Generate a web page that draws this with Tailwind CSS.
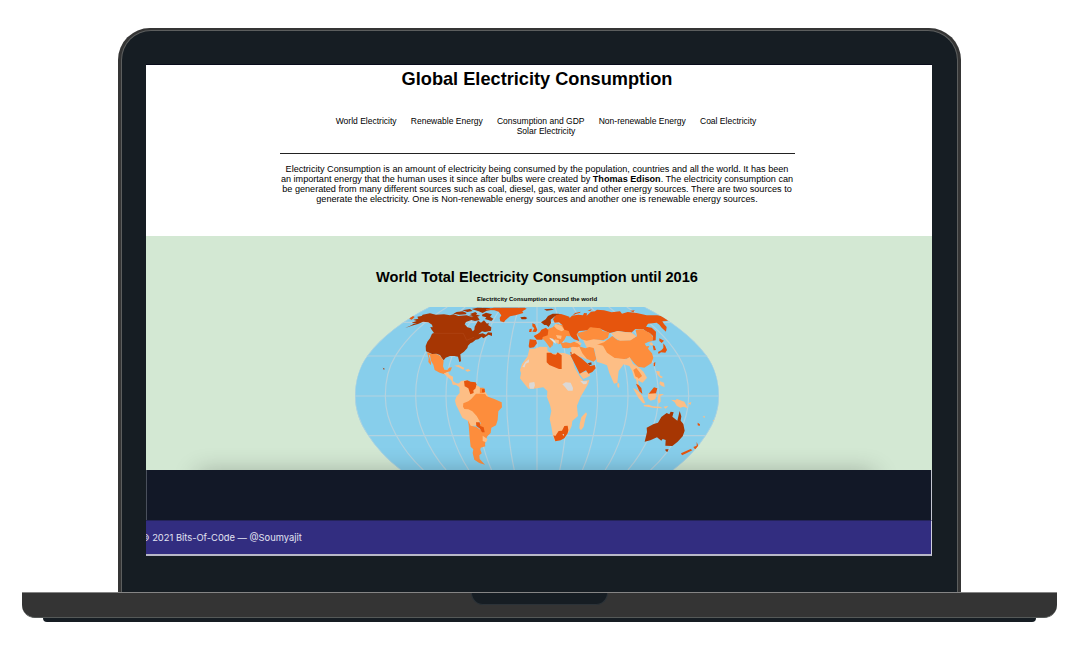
<!DOCTYPE html>
<html lang="en">
<head>
<meta charset="utf-8">
<title>Global Electricity Consumption</title>
<script src="https://cdn.jsdelivr.net/npm/@tailwindcss/browser@4"></script>
</head>
<body class="bg-white w-[1080px] h-[663px] overflow-hidden font-['Liberation_Sans',Arial,sans-serif] text-black">
<div class="flex flex-col items-center pt-[28px] pr-[1px]">
  <!-- laptop lid -->
  <div class="w-[843px] h-[564px] rounded-t-[32px] bg-[#353535] px-[3px] pt-[2px]">
    <div class="h-full rounded-t-[30px] border border-b-0 border-[#5c5e5e] bg-[#161d23] pl-[24px] pt-[33px]">
      <div class="w-[786px] h-[492px] border-t border-[#080b1a] flex flex-col overflow-hidden">
        <header class="h-[171px] shrink-0 bg-white flex flex-col items-center pr-[4px] text-[8.53px] leading-[10.25px]">
          <h1 class="mt-[3px] text-[18.2px] leading-[22px] font-bold whitespace-nowrap">Global Electricity Consumption</h1>
          <nav class="mt-[26px] ml-[18px] flex flex-col items-center whitespace-nowrap">
            <div class="flex gap-[14.2px]"><span>World Electricity</span><span>Renewable Energy</span><span>Consumption and GDP</span><span>Non-renewable Energy</span><span>Coal Electricity</span></div>
            <span>Solar Electricity</span>
          </nav>
          <div class="mt-[16px] w-[515px] h-px bg-[#222] shrink-0"></div>
          <p class="mt-[10px] text-center whitespace-nowrap text-[9.12px]">Electricity Consumption is an amount of electricity being consumed by the population, countries and all the world. It has been<br>an important energy that the human uses it since after bulbs were created by <b>Thomas Edison</b>. The electricity consumption can<br>be generated from many different sources such as coal, diesel, gas, water and other energy sources. There are two sources to<br>generate the electricity. One is Non-renewable energy sources and another one is renewable energy sources.</p>
        </header>
        <main class="relative h-[234px] shrink-0 bg-[#d3e8d3] flex flex-col items-center pr-[4px]">
          <h2 class="mt-[32px] text-[14.58px] leading-[18px] font-bold whitespace-nowrap">World Total Electricity Consumption until 2016</h2>
          <h3 class="mt-[10px] h-[7px] text-[5.94px] leading-[7px] font-bold whitespace-nowrap">Electritcity Consumption around the world</h3>
          <svg class="mt-[4px] ml-[6px] w-[380px] h-[163px] shrink-0" viewBox="0 51 1140 489" fill="none">
            <defs>
              <clipPath id="globe"><path d="M238 51C165 88 97 137 52 197C28 229 15 275 15 318C15 361 30 400 52 433C77 472 112 510 152 540H970C1010 510 1045 472 1070 433C1092 400 1107 361 1107 318C1107 275 1094 229 1070 197C1025 137 957 88 884 51Z"/></clipPath>
              <path id="m" vector-effect="non-scaling-stroke" d="M238 51C165 88 97 137 52 197C28 229 15 275 15 318C15 361 30 400 52 433C77 472 112 510 152 540M970 540C1010 510 1045 472 1070 433C1092 400 1107 361 1107 318C1107 275 1094 229 1070 197C1025 137 957 88 884 51"/>
            </defs>
            <g clip-path="url(#globe)">
              <path fill="#87ceeb" d="M0 51H1140V540H0Z"/>
              <g stroke="#b3d2df" stroke-width="1.2">
                <path stroke-width="3.6" d="M0 97H1140M0 198H1140M0 318H1140M0 437H1140M561 51V540"/>
                <use href="#m"/>
                <use href="#m" transform="translate(93.5) scale(.8333 1)"/>
                <use href="#m" transform="translate(187) scale(.6667 1)"/>
                <use href="#m" transform="translate(280.5) scale(.5 1)"/>
                <use href="#m" transform="translate(374) scale(.3333 1)"/>
                <use href="#m" transform="translate(467.5) scale(.1667 1)"/>
              </g>
              <!-- North America -->
              <path fill="#a63603" d="M165 114L184 106L190 102L200 101L185 98L200 93L190 89L205 86L202 80L215 78L218 74L240 70L258 74L282 73L300 76L311 73L325 78L350 76L366 82L372 78L384 82L389 90L375 93L364 90L348 96L344 103L352 112L363 115L368 124L373 120L374 110L384 92L393 98L402 91L411 101L416 98L415 106L424 112L423 122L405 126L396 124L385 133L398 130L408 134L414 127L426 128L426 138L416 134L400 145L395 140L385 148L377 149L368 157L361 160L354 167L352 174L342 185L331 193L333 214L328 216L324 200L313 198L300 198L287 203L281 211L275 203L270 195L259 191L246 192L228 184L227 168L232 155L240 145L246 131L252 129L244 118L241 111L248 112L246 104L235 97L219 95L204 102L190 106Z"/>
              <path fill="#a63603" d="M310 71L320 66L338 64L350 69L347 73L328 74ZM337 61L360 57L368 63L352 66ZM360 72L376 66L382 71L370 77ZM365 57L382 53L418 54L426 59L410 62L398 69L386 64ZM396 74L408 68L426 73L420 80L430 86L424 93L405 87L409 82L397 79ZM356 78L376 73L390 77L378 82ZM511 82L525 80L532 84L527 88L515 88ZM98 233L104 236L102 240Z"/>
              <path stroke="#b44d1f" stroke-width="1.5" d="M250 130H340L350 151L372 142"/>
              <path fill="#e6550d" d="M176 82L184 75L194 81L185 89L180 87ZM408 57L432 53H524L530 56L517 64L520 69L496 76L480 79L466 91L462 97L451 94L449 84L454 76L446 65L433 61L408 60Z"/>
              <path fill="#fd8d3c" d="M231 187L245 192L259 192L270 197L276 206L281 212L279 229L283 239L292 240L297 233L306 232L301 244L289 247L284 253L269 248L254 240L250 224L243 212L240 196L236 195L243 217L243 226L235 216L236 205Z"/>
              <path fill="#fdbe85" d="M281 250L294 247L298 254L309 260L309 273L319 280L328 284L325 288L315 283L302 269L289 258ZM313 227L326 225L343 234L340 239L326 232ZM345 240L355 237L362 242L352 245Z"/>
              <!-- South America -->
              <path fill="#fdbe85" d="M304 270L315 281L327 280L333 273L348 271L377 285L402 300L415 319L390 365L388 405L359 409L353 392L337 383L318 344L315 332L319 320L329 309L328 292L319 285L308 284Z"/>
              <path fill="#fd8d3c" d="M378 311L405 311L410 319L433 327L455 337L456 352L445 364L443 390L438 406L424 413L422 429L412 439L408 448L405 463L406 469L392 473L391 479L395 490L388 496L389 507L405 524L388 519L373 509L368 489L370 478L362 470L359 443L356 405L354 391L362 407L378 410L402 427L398 423L388 409L392 399L380 378L367 364L355 358L343 357L339 350L340 340L355 334L363 328Z"/>
              <path fill="#e6550d" d="M342 274L352 271L362 275L377 277L380 284L376 296L370 301L371 309L361 313L355 295L344 289ZM378 397L389 397L391 408L401 412L404 427L396 427L390 416L379 408ZM394 296L404 296L405 307L397 309Z"/>
              <path fill="#fd8d3c" d="M389 293L400 293L404 297L395 298L397 310L389 310Z"/>
              <path fill="#fdbe85" d="M379 285L389 291V309L380 308ZM398 437L413 448L408 457L398 453Z"/>
              <!-- Africa -->
              <path fill="#fdbe85" d="M538 176L554 176L570 170L592 171L593 183L610 192L625 188L642 189L660 195L668 210L675 235L691 262L700 273L718 270L714 283L692 320L681 347L682 360L684 378L667 393L665 408L658 423L648 438L632 450L615 454L608 435L604 409L599 387L604 363L600 345L591 322L592 303L580 292L550 296L535 296L524 283L510 265L513 250L510 240L516 222L533 199ZM708 367L711 372L706 386L701 410L693 421L688 415L689 402L694 382Z"/>
              <path fill="#e6550d" d="M590 188L603 188L609 193L618 194L623 187L635 196V237L627 237L598 225L590 217ZM610 436L616 438L626 423L636 422L643 408L653 407L655 420L653 430L643 445L632 451L616 454Z"/>
              <path fill="#dcd8d5" d="M526 216L537 208V217L527 221L524 232L517 231ZM538 278L553 276L555 286L551 296H540L537 288ZM637 283L647 277L662 278L669 294L668 302L654 302L645 291ZM690 272L703 274L712 274L709 282L700 283ZM637 433L642 432L641 438Z"/>
              <!-- Europe and Asia -->
              <g transform="translate(540)">
                <path fill="#fd8d3c" d="M48 119L68 112L78 102L98 106L130 125L120 139L109 138L103 150L94 160L85 163L77 153L65 144L70 158L67 169L53 155L42 150L35 145L20 147L18 139L30 125Z"/>
                <path fill="#e6550d" d="M-1 148L18 150L21 160L12 172L-1 174L-4 169ZM7 100L15 103L22 120L18 126L7 125L13 115L7 109ZM-1 117L6 116L4 126L-3 126ZM11 138L29 128L34 119L48 113L55 121L53 136L38 141L37 149L20 149Z"/>
                <path fill="#a63603" d="M33 97L47 88L54 78L68 71L85 71L94 74L75 79L62 89L63 99L56 111L49 105L43 105ZM42 58L65 56L72 59L50 62Z"/>
                <path fill="#fdbe85" d="M76 101L94 107L103 119L95 124L81 118L72 109ZM78 135L95 137L93 147L82 145ZM74 148L87 151L86 162L75 157ZM123 171L149 168L160 190L173 210L156 202L124 191ZM132 157L142 152L155 160L150 168ZM159 149L180 144L205 149L220 153L235 151L235 159L210 166L221 181L230 200L200 206L193 176L171 174Z"/>
                <path fill="#e1e3df" d="M58 143L67 146L76 154L77 162L70 156L60 147Z"/>
                <path fill="#fd8d3c" d="M42 149L51 151L66 168L60 174L50 160ZM92 160L108 157L121 160L132 155L143 160L152 167L143 172L128 170L114 175L98 174ZM147 169L166 175L178 171L191 174L199 207L191 215L171 207L157 190Z"/>
                <path fill="#e6550d" d="M69 88L78 75L93 72L105 76L118 80L119 84L126 77L144 74L159 76L162 69L171 70L170 77L183 65L195 64L201 59L222 61L245 67L270 64L276 71L293 66L320 69L350 76H382L406 81L419 90L409 93L397 94L402 102L410 111L408 125L395 113L388 104L380 98L354 101L348 110L365 113L378 125L377 151L367 152L369 138L359 129L350 125L339 117L316 117L304 128L264 123L239 129L212 117L183 113L175 121L147 123L140 133L148 153L132 148L122 139L116 123L103 119L97 105L87 97L74 98Z"/>
                <path fill="#e6550d" d="M127 77L135 69L152 65L150 68L137 72ZM172 62L185 58L181 63ZM300 62L314 61L310 67Z"/>
                <path fill="#fd8d3c" d="M140 130L170 122L180 112L211 115L218 123L238 127L234 143L220 151L191 148L170 152L154 148L145 138Z"/>
                <path fill="#fd8d3c" d="M200 164L222 157L247 138L263 151L300 151L321 139L317 119L337 117L360 130L370 143L366 153L354 156L344 161L349 169L358 168L354 176L366 190L370 203L364 220L343 233L324 230L313 220L301 205L277 208L246 204L226 186L218 169Z"/>
                <path fill="#fdbe85" d="M244 130L263 123L286 127L303 127L319 139L302 151L270 152L255 144ZM201 163L219 167L231 188L254 204L289 208L299 201L309 222L326 232L341 246L351 263L338 278L331 275L313 265L306 242L298 228L290 226L281 223L266 243L262 278L252 281L238 249L231 226L215 220L201 216L196 188ZM147 250L174 244L181 257L160 267ZM262 281L269 289L264 294Z"/>
                <path fill="#fd8d3c" d="M310 240L319 234L329 247L336 258L326 266L316 259Z"/>
                <path stroke="#fdbe85" stroke-width="5" d="M320 262L324 286"/>
                <path fill="#e6550d" d="M121 195L133 190L154 205L173 221L181 228L194 225L197 235L187 246L175 251L168 241L149 251L139 231ZM120 185L126 188L123 195ZM388 145L402 152L395 159L388 153ZM400 160L406 168L411 180L406 188L393 187L386 192L384 186L394 181L400 174ZM368 166L374 168L378 180L371 181ZM371 219L376 216L375 228L371 229Z"/>
                <path fill="#a63603" d="M173 220L184 217L185 224L178 225Z"/>
                <path fill="#fdbe85" d="M378 243L389 244L389 256L399 261L393 265L383 255ZM390 274L402 278L404 291L395 288L388 282ZM357 161L364 156L370 164L364 167Z"/>
                <!-- Oceania -->
                <g transform="translate(0 270)">
                  <path fill="#fdbe85" d="M309 24L322 31L337 48L346 70L339 70L325 53ZM341 75L356 74L368 79L390 80L398 85L374 84L342 79ZM354 40L373 38L381 43L376 58L362 62L354 55ZM386 43L402 42L391 49L392 65L386 71L383 60ZM400 80L415 78L407 86ZM423 59L436 61L441 57L463 65L474 85L460 80L451 83L440 77L434 67ZM474 70L484 66L481 75Z"/>
                  <path fill="#e6550d" d="M318 11L326 15L334 24L337 42L328 34ZM356 41L372 22L382 25L378 40ZM503 128L510 133L509 138L503 136ZM500 186L504 195L503 205L495 208L490 201L500 197ZM453 220L482 207L487 211L469 220L456 226Z"/>
                  <path fill="#a63603" d="M344 185L351 156L350 143L371 132L384 128L394 111L410 99L418 103L422 95L431 97L427 110L442 122L449 93L454 109L452 122L460 132L464 152L458 169L443 185L427 198L406 197L407 180L398 177L394 182L381 172L361 181ZM406 208L416 208L412 216L407 213Z"/>
                  <path fill="#fdbe85" d="M250 0L256 2L260 7L254 8ZM263 7L268 12L267 23L262 19ZM518 110L524 107V114ZM548 121L552 120V124Z"/>
                </g>
              </g>
            </g>
          </svg>
          <div class="absolute bottom-0 left-[10px] w-[760px] h-[22px] overflow-hidden"><div class="mt-[25px] mx-[42px] h-[20px] shadow-[0_0_24px_0_rgba(0,0,0,.3)]"></div></div>
        </main>
        <section class="h-[50px] shrink-0 bg-[#121827] border-l border-r border-l-[#4a505c] border-r-[#c5c8d2]"></section>
        <footer class="h-[36px] shrink-0 bg-[#322d80] border-t border-r border-b-2 border-t-[#24235b] border-r-[#d0cfe0] border-b-[#b8b8c7] flex items-center overflow-hidden text-[#e2e4f2] text-[9.35px] font-['Inter'] whitespace-nowrap"><span class="-ml-[5px] pt-[2px]">© 2021 Bits-Of-C0de — @Soumyajit</span></footer>
      </div>
    </div>
  </div>
  <!-- laptop base -->
  <div class="w-[1035px] h-[26px] rounded-b-[13px] bg-[#343434] border-t border-b border-t-[#858585] border-b-[#555958] flex justify-center">
    <div class="w-[137px] h-[12px] rounded-b-[13px] border-x border-b border-[#2b3238] bg-[#161d23]"></div>
  </div>
  <div class="w-[993px] h-[4px] bg-[#161d23] rounded-b-[5px]"></div>
</div>
</body>
</html>
